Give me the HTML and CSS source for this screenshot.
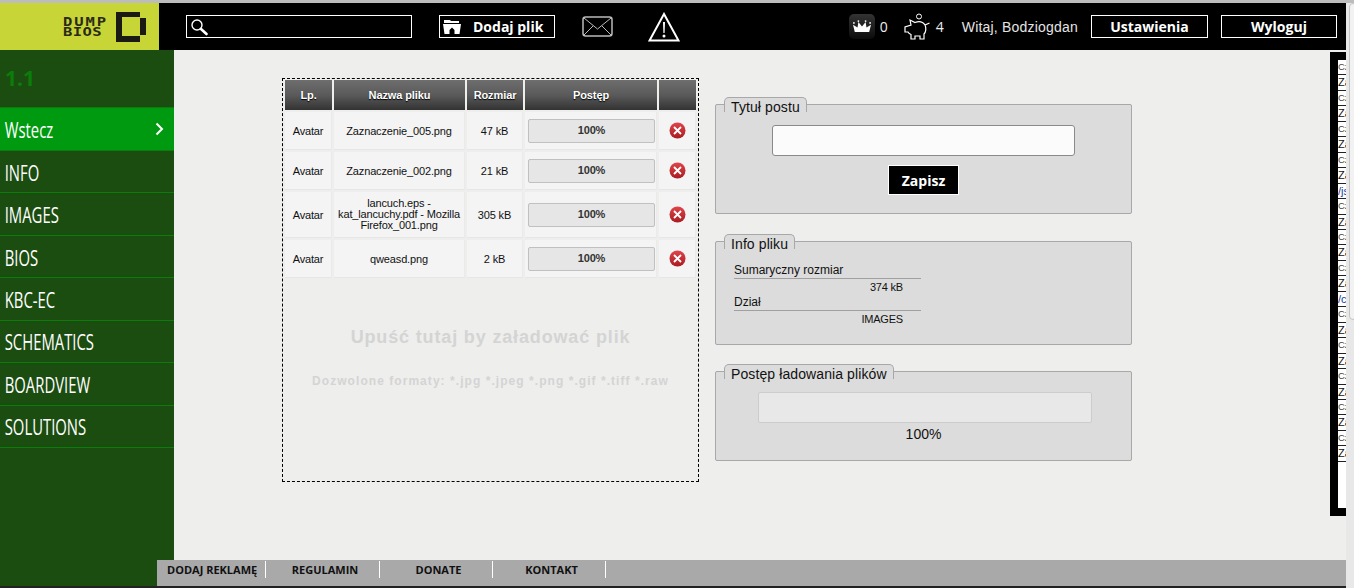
FILE: index.html
```html
<!DOCTYPE html>
<html lang="pl">
<head>
    <meta charset="UTF-8">
    <title>Dump Bios</title>
    <link rel="stylesheet" href="styles.css">
</head>
<body>

    <header class="topbar">
        <div class="logo">
            <div class="logo-text">
                <div class="logo-dump">DUMP</div>
                <div class="logo-bios">BIOS</div>
            </div>
            <svg class="logo-mark" width="30" height="30" viewBox="0 0 30 30"><path fill="#1a1a12" d="M0 0H24V5H6V24H24V30H0ZM24 6H30V23H24Z"/></svg>
        </div>
        <div class="search">
            <svg width="18" height="18" viewBox="0 0 18 18"><circle cx="7" cy="7" r="5" fill="none" stroke="#fff" stroke-width="1.4"/><path d="M11 11L16.5 16" stroke="#fff" stroke-width="2.6" stroke-linecap="round"/></svg>
        </div>
        <a class="btn btn-add">
            <svg width="18" height="14" viewBox="0 0 18 14"><path fill="#fff" d="M1 0H7L8 1H16V3H1ZM0 4H18L16.500 14H11.500V10L9 7.500L6.500 10V14H1.500Z"/></svg>
            Dodaj plik
        </a>
        <svg class="icon-mail" width="31" height="21" viewBox="0 0 31 21"><rect x="1" y="1" width="29" height="19" rx="2.500" fill="none" stroke="#bbb" stroke-width="1.500"/><path d="M2 2L15.500 13L29 2M2 19L11 10M29 19L20 10" fill="none" stroke="#bbb"/></svg>
        <svg class="icon-warn" width="32" height="30" viewBox="0 0 32 30"><path d="M16 2L30.500 28.500H1.500Z" fill="none" stroke="#fff" stroke-width="2"/><path d="M15 10H17L16.600 21H15.400Z" fill="#fff"/><circle cx="16" cy="24" r="1.500" fill="#fff"/></svg>
        <div class="status">
            <div class="crown">
                <svg width="18" height="15" viewBox="0 0 20 14"><path fill="#fff" d="M2 13L0 5L5 8L6 2L10 7L14 2L15 8L20 5L18 13Z"/><circle cx="1" cy="3" r="1" fill="#fff"/><circle cx="6" cy="1" r="1" fill="#fff"/><circle cx="14" cy="1" r="1" fill="#fff"/><circle cx="19" cy="3" r="1" fill="#fff"/></svg>
            </div>
            <span class="count">0</span>
            <svg class="pig" width="27" height="27" viewBox="0 0 27 27"><path d="M21 12C22.500 15 22 19 20 21V26H16V23H11V26H7V21.500C6 21 4.500 20 4 19H1V14L7 12L6 7L11 9.500C15 8 19 9 21 12L25.500 10" fill="none" stroke="#fff" stroke-width="1.200"/><circle cx="15" cy="3.500" r="2.500" fill="none" stroke="#fff"/></svg>
            <span class="count">4</span>
            <span class="hello">Witaj, Bodziogdan</span>
            <a class="btn btn-user">Ustawienia</a>
            <a class="btn btn-logout">Wyloguj</a>
        </div>
    </header>

    <div class="main">
        <nav class="sidebar">
            <div class="version">1.1</div>
            <a class="back"><span>Wstecz</span>
                <svg width="9" height="14" viewBox="0 0 9 14"><path d="M1.500 1.500L7 7L1.500 12.500" fill="none" stroke="#fff" stroke-width="2"/></svg>
            </a>
            <a class="item"><span>INFO</span></a>
            <a class="item"><span>IMAGES</span></a>
            <a class="item"><span>BIOS</span></a>
            <a class="item"><span>KBC-EC</span></a>
            <a class="item"><span>SCHEMATICS</span></a>
            <a class="item"><span>BOARDVIEW</span></a>
            <a class="item"><span>SOLUTIONS</span></a>
        </nav>

        <div class="content">
            <div class="dropzone">
                <table class="files">
                    <tr>
                        <th class="c1">Lp.</th><th class="c2">Nazwa pliku</th><th class="c3">Rozmiar</th><th class="c4">Postęp</th><th class="c5"></th>
                    </tr>
                    <tr class="r38">
                        <td>Avatar</td><td>Zaznaczenie_005.png</td><td>47 kB</td>
                        <td><div class="bar">100%</div></td>
                        <td><svg class="del" width="17" height="17" viewBox="0 0 17 17"><use href="#del"/></svg></td>
                    </tr>
                    <tr class="r38">
                        <td>Avatar</td><td>Zaznaczenie_002.png</td><td>21 kB</td>
                        <td><div class="bar">100%</div></td>
                        <td><svg class="del" width="17" height="17" viewBox="0 0 17 17"><use href="#del"/></svg></td>
                    </tr>
                    <tr class="r46">
                        <td>Avatar</td><td class="long">lancuch.eps - kat_lancuchy.pdf - Mozilla Firefox_001.png</td><td>305 kB</td>
                        <td><div class="bar">100%</div></td>
                        <td><svg class="del" width="17" height="17" viewBox="0 0 17 17"><use href="#del"/></svg></td>
                    </tr>
                    <tr class="r38">
                        <td>Avatar</td><td>qweasd.png</td><td>2 kB</td>
                        <td><div class="bar">100%</div></td>
                        <td><svg class="del" width="17" height="17" viewBox="0 0 17 17"><use href="#del"/></svg></td>
                    </tr>
                </table>
                <div class="drop-title">Upuść tutaj by załadować plik</div>
                <div class="drop-formats">Dozwolone formaty: *.jpg *.jpeg *.png *.gif *.tiff *.raw</div>
            </div>

            <div class="panels">
                <fieldset class="panel panel-title">
                    <legend>Tytuł postu</legend>
                    <input class="title-input" type="text">
                    <button class="save">Zapisz</button>
                </fieldset>
                <fieldset class="panel panel-info">
                    <legend>Info pliku</legend>
                    <div class="info-label">Sumaryczny rozmiar</div>
                    <div class="info-value">374 kB</div>
                    <div class="info-label">Dział</div>
                    <div class="info-value">IMAGES</div>
                </fieldset>
                <fieldset class="panel panel-progress">
                    <legend>Postęp ładowania plików</legend>
                    <div class="upload-bar"></div>
                    <div class="upload-pct">100%</div>
                </fieldset>
            </div>

            <div class="log" id="log"></div>
        </div>
    </div>

    <footer class="footer">
        <a class="first">DODAJ REKLAMĘ</a>
        <a class="second">REGULAMIN</a>
        <a>DONATE</a>
        <a>KONTAKT</a>
    </footer>

    <div class="scrollbar"><div class="thumb"></div></div>

    <svg width="0" height="0" class="defs">
        <defs>
            <linearGradient id="red" x1="0" y1="0" x2="0" y2="1"><stop offset="0" stop-color="#e0454a"/><stop offset="1" stop-color="#a81c22"/></linearGradient>
            <g id="del"><circle cx="8.500" cy="8.500" r="8" fill="url(#red)"/><path d="M5 5L12 12M12 5L5 12" stroke="#fff" stroke-width="1.800"/></g>
        </defs>
    </svg>

    <script src="log.js"></script>
</body>
</html>
```

FILE: log.js
```js
// lista wpisow z prawej strony
let rows = ['Czas', 'Zapytanie', 'Czas', 'Zapytanie', 'Czas', 'Zapytanie', 'Czas', 'Zapytanie', '/js/main.js',
    'Czas', 'Zapytanie', 'Czas', 'Zapytanie', 'Czas', 'Zapytanie', '/css/main.css',
    'Czas', 'Zapytanie', 'Czas', 'Zapytanie', 'Czas', 'Zapytanie', 'Czas', 'Zapytanie', 'Czas', 'Zapytanie'];
let log = document.getElementById('log');

rows.forEach(function(text) {
    let row = document.createElement('div');
    row.textContent = text;
    row.className = text.charAt(0) === 'Z' ? 'log-big' : (text.charAt(0) === '/' ? 'log-link' : 'log-small');
    log.appendChild(row);
});
```

FILE: styles.css
```css
* {
    box-sizing: border-box;
}
body {
    margin: 0;
    padding: 3px 8px 2px 0;
    height: 588px;
    overflow: hidden;
    position: relative;
    font-family: "Liberation Sans", Arial, sans-serif;
    background-color: #222222;
    display: flex;
    flex-direction: column;
}
body::before {
    content: "";
    position: absolute;
    left: 0;
    top: 0;
    right: 0;
    height: 3px;
    background-color: #bcbcbc;
}
.defs {
    position: absolute;
}

/* gorny pasek */
.topbar {
    height: 47px;
    flex: none;
    background-color: #000000;
    display: flex;
    align-items: center;
    color: white;
}
.logo {
    width: 159px;
    height: 47px;
    background-color: #c8d536;
    display: flex;
    align-items: center;
    justify-content: flex-end;
    padding-right: 13px;
}
.logo-text {
    width: 53px;
    font-family: "DejaVu Sans Mono", monospace;
    font-size: 11.500px;
    font-weight: bold;
    line-height: 10px;
    color: #2a2a18;
    transform: scaleX(1.35);
    transform-origin: left center;
}
.logo-dump {
    letter-spacing: 1.400px;
}
.logo-bios {
    letter-spacing: 0.300px;
}
.search {
    width: 226px;
    height: 23px;
    margin-left: 27px;
    border: 1px solid white;
    display: flex;
    align-items: center;
    padding-left: 3px;
}
.btn {
    height: 23px;
    border: 1px solid white;
    font-family: "Open Sans", sans-serif;
    font-size: 14px;
    font-weight: bold;
    color: white;
    display: flex;
    align-items: center;
    justify-content: center;
}
.btn-add {
    width: 116px;
    margin-left: 27px;
    padding-left: 3px;
    gap: 12px;
    justify-content: flex-start;
}
.icon-mail {
    margin-left: 27px;
}
.icon-warn {
    margin-left: 35px;
}
.status {
    margin-left: auto;
    display: flex;
    align-items: center;
    font-family: "Open Sans", sans-serif;
    font-size: 14px;
}
.crown {
    width: 26px;
    height: 25px;
    border-radius: 5px;
    background: linear-gradient(#333333, #0c0c0c);
    display: flex;
    align-items: center;
    justify-content: center;
}
.count {
    margin-left: 5px;
    color: #eeeeee;
}
.pig {
    margin-left: 16px;
}
.hello {
    margin-left: 18px;
    font-family: "Liberation Sans", Arial, sans-serif;
    letter-spacing: 0.200px;
    color: #e4e4e4;
}
.btn-user {
    width: 117px;
    margin-left: 13px;
}
.btn-logout {
    width: 116px;
    margin-left: 13px;
    margin-right: 9px;
}

/* uklad */
.main {
    flex: 1;
    display: flex;
    min-height: 0;
}
.sidebar {
    width: 174px;
    flex: none;
    background-color: #1c4d10;
}
.version {
    height: 57px;
    padding: 13px 0 0 5px;
    font-family: "Open Sans", sans-serif;
    font-size: 21px;
    font-weight: bold;
    line-height: 30px;
    color: #0a7d0a;
}
.sidebar a {
    display: flex;
    align-items: center;
    justify-content: space-between;
    font-family: "Open Sans", sans-serif;
    font-size: 22px;
    color: white;
}
.sidebar a span {
    display: inline-block;
    padding-left: 7px;
    transform: scaleX(0.675);
    transform-origin: left center;
}
.back {
    height: 44px;
    padding-right: 10px;
    background-color: #009a10;
    border-top: 1px solid #0a7d0a;
    border-bottom: 1px solid #0a7d0a;
}
.item {
    height: 42.450px;
    border-bottom: 1px solid #0a7d0a;
}
.content {
    flex: 1;
    background-color: #eeeeec;
    position: relative;
    display: flex;
    align-items: flex-start;
    padding: 28px 0 0 108px;
}

/* pole upuszczania */
.dropzone {
    width: 417px;
    height: 404px;
    flex: none;
    border: 1px dashed #000000;
    text-align: center;
}
.files {
    width: 415px;
    table-layout: fixed;
    border-collapse: separate;
    border-spacing: 2px;
    margin-top: -1px;
    font-size: 11px;
    letter-spacing: -0.150px;
    color: #111111;
}
.files th {
    height: 30px;
    padding: 0;
    color: white;
    font-size: 11px;
    letter-spacing: -0.100px;
    text-shadow: 0 1px 1px #000000;
    background: linear-gradient(#6e6e6e, #5a5a5a 50%, #333333);
}
.files .c1 { width: 47px; }
.files .c2 { width: 131px; }
.files .c3 { width: 56px; }
.files .c4 { width: 132px; }
.files td {
    padding: 0;
    background-color: #f4f4f4;
    border-bottom: 1px solid #e6e6e6;
    border-right: 1px solid #eaeaea;
    text-align: center;
}
.r38 td {
    height: 38px;
}
.r46 td {
    height: 46px;
}
.long {
    line-height: 11px;
}
.bar {
    height: 24px;
    margin: 0 1px 0 3px;
    border: 1px solid #c0c0c0;
    border-radius: 2px;
    background-color: #e6e6e6;
    font-weight: bold;
    line-height: 20px;
    color: #333333;
}
.del {
    display: block;
    margin: 0 auto;
}
.drop-title {
    margin-top: 47px;
    font-size: 18px;
    font-weight: bold;
    letter-spacing: 0.850px;
    color: #d4d4d4;
}
.drop-formats {
    margin-top: 26px;
    font-size: 12px;
    font-weight: bold;
    letter-spacing: 1.050px;
    color: #d4d4d4;
}

/* panele z prawej */
.panels {
    width: 417px;
    margin: 19px 0 0 16px;
    display: flex;
    flex-direction: column;
}
.panel {
    margin: 0;
    padding: 0;
    border: 1px solid #a8a8a8;
    border-radius: 2px;
    background-color: #dcdcdc;
    min-width: 0;
}
.panel legend {
    margin-left: 8px;
    padding: 0 6px;
    height: 15px;
    font-size: 14px;
    letter-spacing: 0.100px;
    line-height: 19px;
    color: #111111;
    background-color: #dcdcdc;
    border: 1px solid #a8a8a8;
    border-bottom: 0;
    border-radius: 5px 5px 0 0;
}
.panel-title {
    height: 117px;
}
.panel-info {
    height: 111px;
    margin-top: 20px;
}
.panel-progress {
    height: 97px;
    margin-top: 19px;
}
.title-input {
    display: block;
    width: 303px;
    height: 31px;
    margin: 13px auto 0;
    background-color: #fbfbfb;
    border: 1px solid #8a8a8a;
    border-radius: 3px;
}
.save {
    display: block;
    width: 71px;
    height: 30px;
    margin: 9px auto 0;
    padding: 0;
    border: 1px solid white;
    background-color: black;
    color: white;
    font-family: "Open Sans", sans-serif;
    font-size: 14px;
    font-weight: bold;
}
.info-label {
    width: 187px;
    margin-left: 18px;
    font-size: 12px;
    line-height: 15px;
    color: #111111;
    border-bottom: 1px solid #a0a0a0;
}
.panel-info .info-label:first-of-type {
    margin-top: 14px;
}
.info-value {
    width: 187px;
    margin-left: 18px;
    padding-right: 18px;
    font-size: 11px;
    letter-spacing: -0.200px;
    line-height: 16px;
    text-align: right;
    color: #111111;
}
.upload-bar {
    width: 334px;
    height: 31px;
    margin: 13px 0 0 42px;
    border: 1px solid #cccccc;
    border-radius: 2px;
    background-color: #e8e8e8;
}
.upload-pct {
    margin-top: 2px;
    font-size: 14px;
    line-height: 18px;
    text-align: center;
    color: #111111;
}

/* lista po prawej */
.log {
    position: absolute;
    right: 0;
    top: 2px;
    width: 16px;
    height: 464px;
    background-color: white;
    border: 8px solid black;
    border-right: 0;
    overflow: hidden;
    white-space: nowrap;
}
.log div {
    height: 15.460px;
    overflow: hidden;
    border-bottom: 1px solid #222222;
    line-height: 14px;
}
.log-small {
    font-size: 9.500px;
    color: #444444;
}
.log-big {
    font-size: 11px;
    color: #111111;
}
.log-link {
    font-size: 11px;
    color: #1a3a9a;
}

/* stopka */
.footer {
    position: absolute;
    left: 157px;
    right: 8px;
    bottom: 2px;
    height: 26px;
    background-color: #a9a9a9;
    display: flex;
    padding-top: 1px;
}
.footer a {
    width: 113px;
    height: 17px;
    padding-left: 5px;
    border-right: 1px solid white;
    font-family: "Open Sans", sans-serif;
    font-size: 11px;
    font-weight: bold;
    line-height: 17px;
    text-align: center;
    color: #111111;
}
.footer .first {
    width: 109px;
    padding-left: 10px;
    text-align: left;
}
.footer .second {
    width: 114px;
}

.scrollbar {
    position: absolute;
    right: 0;
    top: 3px;
    bottom: 0;
    width: 8px;
    background-color: #e8e8e8;
}
.thumb {
    width: 8px;
    height: 317px;
    margin-left: 3px;
    background-color: #f2f2f2;
    border: 1px solid #c4c4c4;
    border-radius: 4px;
}
```
